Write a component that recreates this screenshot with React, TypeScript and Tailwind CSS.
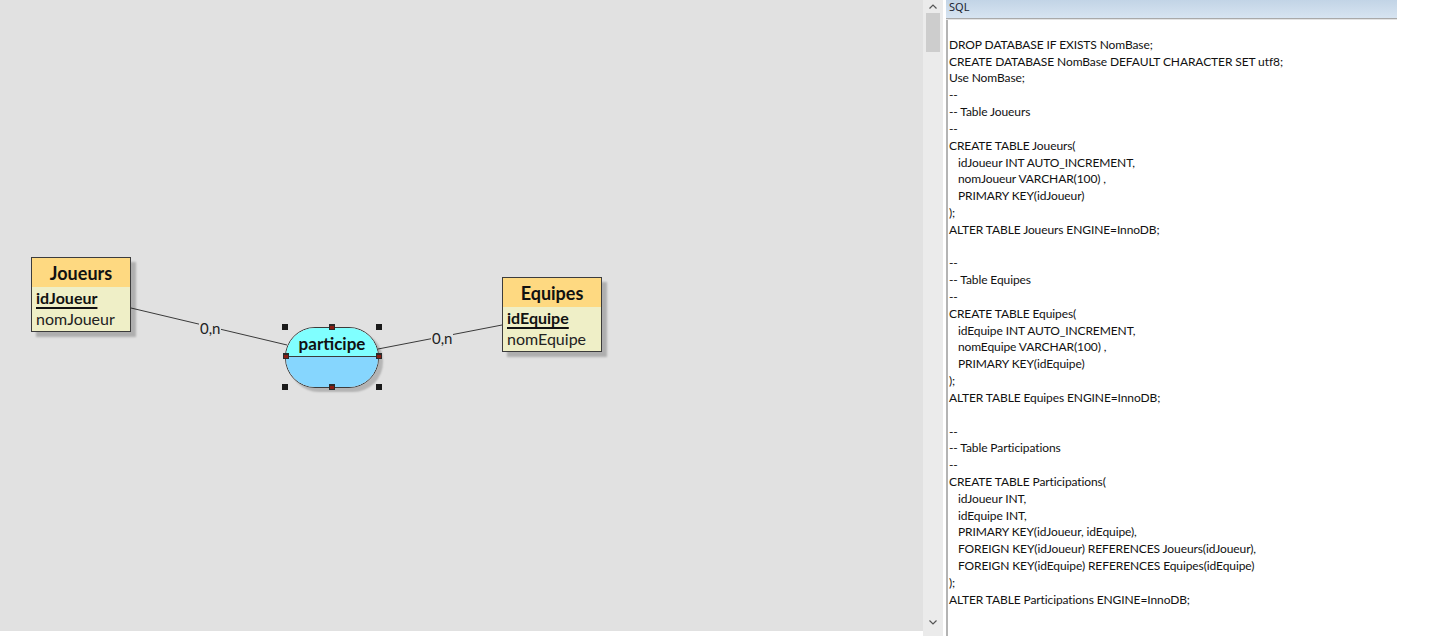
import React from "react";

const sql: string[] = [
  "",
  "DROP DATABASE IF EXISTS NomBase;",
  "CREATE DATABASE NomBase DEFAULT CHARACTER SET utf8;",
  "Use NomBase;",
  "--",
  "-- Table Joueurs",
  "--",
  "CREATE TABLE Joueurs(",
  "   idJoueur INT AUTO_INCREMENT,",
  "   nomJoueur VARCHAR(100) ,",
  "   PRIMARY KEY(idJoueur)",
  ");",
  "ALTER TABLE Joueurs ENGINE=InnoDB;",
  "",
  "--",
  "-- Table Equipes",
  "--",
  "CREATE TABLE Equipes(",
  "   idEquipe INT AUTO_INCREMENT,",
  "   nomEquipe VARCHAR(100) ,",
  "   PRIMARY KEY(idEquipe)",
  ");",
  "ALTER TABLE Equipes ENGINE=InnoDB;",
  "",
  "--",
  "-- Table Participations",
  "--",
  "CREATE TABLE Participations(",
  "   idJoueur INT,",
  "   idEquipe INT,",
  "   PRIMARY KEY(idJoueur, idEquipe),",
  "   FOREIGN KEY(idJoueur) REFERENCES Joueurs(idJoueur),",
  "   FOREIGN KEY(idEquipe) REFERENCES Equipes(idEquipe)",
  ");",
  "ALTER TABLE Participations ENGINE=InnoDB;",
];

function Entity({
  left,
  top,
  title,
  id,
  name,
}: {
  left: number;
  top: number;
  title: string;
  id: string;
  name: string;
}) {
  return (
    <div
      className="absolute w-[100px] border border-[#3c3c3c] shadow-[5px_5px_2px_rgba(0,0,0,0.22)]"
      style={{ left, top }}
    >
      <div className="h-[31px] bg-[#fed981] border-b border-[#3c3c3c] flex items-center justify-center text-[18px] font-bold text-[#111]">
        {title}
      </div>
      <div className="h-[44px] bg-[#efefc7] px-[4px] text-[16px] text-[#222] leading-[21px]">
        <div className="-mt-[2px] font-bold text-[#111] underline decoration-[1.5px] underline-offset-[3px]">{id}</div>
        <div>{name}</div>
      </div>
    </div>
  );
}

function Handle({ x, y, mid }: { x: number; y: number; mid?: boolean }) {
  return (
    <div
      className={
        "absolute w-[6px] h-[6px] " + (mid ? "bg-[#2a2a2a] flex items-center justify-center" : "bg-[#1a1a1a]")
      }
      style={{ left: x, top: y }}
    >
      {mid ? <div className="w-[4px] h-[3px] bg-[#8a1c12]" /> : null}
    </div>
  );
}

export default function App() {
  return (
    <div
      className="w-[1455px] h-[636px] flex bg-white overflow-hidden"
      style={{ fontFamily: "Lato, 'Liberation Sans', sans-serif" }}
    >
      {/* Canvas */}
      <div className="w-[923px] flex flex-col">
        <div className="relative h-[631px] bg-[#e1e1e1]">
          <svg className="absolute inset-0" width="923" height="631">
            <line x1="131" y1="308" x2="287" y2="345" stroke="#3a3a3a" strokeWidth="1" />
            <line x1="378" y1="349" x2="502" y2="325" stroke="#3a3a3a" strokeWidth="1" />
          </svg>
          <div className="absolute left-[199px] top-[319px] bg-[#e1e1e1] text-[15px] leading-[18px] text-[#222] px-[1px]">
            0,n
          </div>
          <div className="absolute left-[431px] top-[329px] bg-[#e1e1e1] text-[15px] leading-[18px] text-[#222] px-[1px]">
            0,n
          </div>

          <Entity left={31} top={257} title="Joueurs" id="idJoueur" name="nomJoueur" />
          <Entity left={502} top={277} title="Equipes" id="idEquipe" name="nomEquipe" />

          {/* Association */}
          <div className="absolute left-[285px] top-[327px] w-[94px] h-[61px] rounded-[30px] border border-[#3c3c3c] overflow-hidden flex flex-col shadow-[4px_4px_2px_rgba(0,0,0,0.2)]">
            <div className="h-[29px] bg-[#80ffff] border-b border-[#3c3c3c] flex items-end justify-center pb-[3px] text-[17px] font-bold text-[#111] leading-[18px]">
              participe
            </div>
            <div className="flex-1 bg-[#86d6fe]" />
          </div>
          <Handle x={282} y={324} />
          <Handle x={376} y={324} />
          <Handle x={282} y={384} />
          <Handle x={376} y={384} />
          <Handle x={329} y={324} mid />
          <Handle x={329} y={384} mid />
          <Handle x={283} y={353} mid />
          <Handle x={376} y={353} mid />
        </div>
      </div>

      {/* Scrollbar */}
      <div className="w-[20px] h-[636px] bg-[#ebebeb] flex flex-col items-center">
        <div className="h-[12px] flex items-center justify-center">
          <svg width="8" height="5" viewBox="0 0 8 5">
            <polyline points="0.5,4.5 4,1 7.5,4.5" fill="none" stroke="#555" strokeWidth="1.2" />
          </svg>
        </div>
        <div className="mt-[1px] w-[14px] h-[39px] bg-[#cdcdcd]" />
        <div className="flex-1" />
        <div className="h-[22px] flex items-start justify-center pt-[6px]">
          <svg width="8" height="5" viewBox="0 0 8 5">
            <polyline points="0.5,0.5 4,4 7.5,0.5" fill="none" stroke="#555" strokeWidth="1.2" />
          </svg>
        </div>
      </div>
      <div className="w-[3px] bg-white" />

      {/* SQL panel */}
      <div className="w-[451px] h-[636px] flex flex-col">
        <div
          className="h-[18px] bg-gradient-to-b from-[#c2d4e6] to-[#d7e4f1] pl-[3px] text-[11px] leading-[14px] text-[#1b2430]"
          style={{ fontFamily: "'Noto Sans', sans-serif" }}
        >
          SQL
        </div>
        <div className="h-[1px] bg-[#a9a9a9]" />
        <div className="h-[1px] bg-[#e4e4e4]" />
        <div className="flex-1 border-l-2 border-[#b4b4b4] bg-white pl-[1px]">
          {sql.map((l, i) => (
            <div
              key={i}
              className="h-[16.82px] leading-[16.82px] text-[12px] tracking-[-0.1px] text-[#111] whitespace-pre"
            >
              {l}
            </div>
          ))}
        </div>
      </div>
      <div className="flex-1 bg-white" />
    </div>
  );
}
